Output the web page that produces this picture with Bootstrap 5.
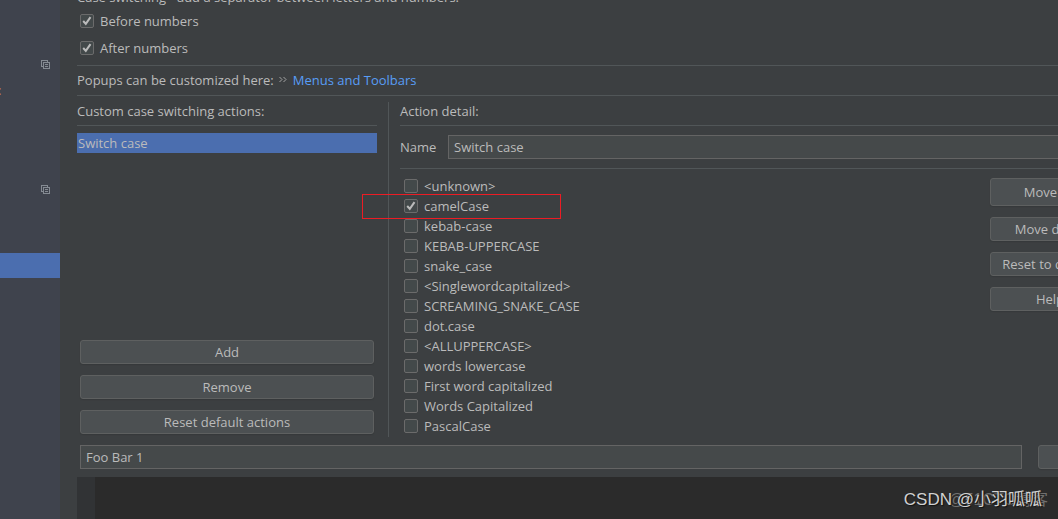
<!DOCTYPE html>
<html lang="en">
<head>
<meta charset="utf-8">
<meta name="viewport" content="width=device-width, initial-scale=1">
<title>String Manipulation settings</title>
<link href="https://cdn.jsdelivr.net/npm/bootstrap@5.3.0/dist/css/bootstrap.min.css" rel="stylesheet">
<style>
  body { background: #3c3f41; color: #bbb; font: 13px/20px "Open Sans", "Noto Sans CJK SC", sans-serif; }
  .sidebar { width: 60px; background: #3f434d; }
  .sidebar svg { position: absolute; left: 41px; }
  .sidebar .icon-a { top: 60px; }
  .sidebar .icon-b { top: 185px; }
  .sidebar .selection { position: absolute; top: 253px; left: 0; right: 0; height: 25px; background: #4b6eaf; }
  .sidebar .modified { position: absolute; left: -2px; top: 80px; color: #c8946a; }
  /* the settings pane is wider than the window and is scrolled down a little */
  .pane { margin-right: -55px; padding-left: 17px; }
  .scrolled { margin-top: -13px; height: 20px; }
  .rule-b { border-bottom: 1px solid #515658; }
  .opt { display: flex; align-items: center; height: 27px; padding-left: 3px; }
  .opt label, .case-row label { padding-left: 6px; }
  .case-row { position: relative; display: flex; align-items: center; height: 20px; padding-left: 4px; }
  .tick { appearance: none; width: 14px; height: 14px; margin: 0; flex: none; border: 1px solid #6b6b6b; border-radius: 2px; background: #43494a; }
  .tick:checked { background: #43494a url("data:image/svg+xml,%3Csvg xmlns='http://www.w3.org/2000/svg' viewBox='0 0 12 12'%3E%3Cpath d='M2.200 6 4.800 8.800 9.500 2.200' fill='none' stroke='%23bbb' stroke-width='2'/%3E%3C/svg%3E") center/12px; }
  .pop-link { color: #589df6; text-decoration: none; }
  .popups { height: 30px; padding-bottom: 1px; }
  .split { height: 335px; margin: 6px 0 8px; }
  .left { width: 312px; padding-right: 11px; border-right: 1px solid #515658; }
  .right { padding-left: 11px; }
  .pane-title { height: 24px; line-height: 18px; }
  .actions { margin-top: 7px; }
  .actions .active-item { background: #4b6eaf; height: 20px; padding: 0 1px; border: 0; color: #bbb; text-align: left; }
  .stack { gap: 11px; padding: 0 3px 3px; }
  .ide-btn { height: 24px; padding: 0; border: 1px solid #5e6060; border-radius: 3px; background: #4c5052; color: #bbb; font-size: 13px; line-height: 20px; box-shadow: 0 1px 1px #36393b; }
  .ide-btn.tall { height: 28px; }
  .field { height: 24px; min-width: 0; padding: 0 5px; border: 1px solid #646464; background: #45494a; color: #bbb; font-size: 13px; }
  .name-row { height: 43px; }
  .name-row label { width: 48px; }
  .cases { padding-top: 7px; }
  .side-buttons { width: 120px; gap: 11px; margin: 2px 3px 0 0; }
  .marker { position: absolute; left: -38px; top: -2px; width: 199px; height: 25px; border: 1px solid #ed1c24; }
  .preview { padding: 0 3px 8px; gap: 16px; }
  .preview .ide-btn { width: 72px; }
  .editor { background: #2b2b2b; }
  .gutter { width: 18px; background: #313335; }
  .wm { position: absolute; bottom: 7px; line-height: 24px; white-space: nowrap; font-family: "Liberation Sans", "Noto Sans CJK SC", sans-serif; }
  .wm-back { right: 10px; font-size: 16px; color: #707070; }
  .wm-front { right: 16px; font-size: 17px; color: #d0d0d0; text-shadow: 1px 1px 1px #111; }
</style>
</head>
<body class="overflow-hidden">
<div class="d-flex vh-100 overflow-hidden position-relative">
  <aside class="sidebar position-relative flex-shrink-0 overflow-hidden">
    <span class="modified">:</span>
    <svg class="icon-a" width="9" height="9" viewBox="0 0 9 9" fill="none" stroke="#858b93" shape-rendering="crispEdges"><path d="M2 6.500H.5V.5H6.500V2M2.500 2.500H8.500V8.500H2.500ZM4 4.500H7M4 6.500H7"/></svg>
    <svg class="icon-b" width="9" height="9" viewBox="0 0 9 9" fill="none" stroke="#858b93" shape-rendering="crispEdges"><path d="M2 6.500H.5V.5H6.500V2M2.500 2.500H8.500V8.500H2.500ZM4 4.500H7M4 6.500H7"/></svg>
    <div class="selection"></div>
  </aside>
  <main class="pane d-flex flex-column flex-grow-1">
    <div class="scrolled">Case switching - add a separator between letters and numbers:</div>
    <div class="rule-b pb-1">
      <div class="opt"><input class="tick" type="checkbox" id="before" checked><label for="before">Before numbers</label></div>
      <div class="opt"><input class="tick" type="checkbox" id="after" checked><label for="after">After numbers</label></div>
    </div>
    <div class="popups rule-b d-flex align-items-center flex-shrink-0">
      <span>Popups can be customized here:</span>
      <svg class="me-1" width="15" height="8" viewBox="0 0 15 8" fill="none" stroke="#a5a5a5"><path d="M5.500 1l2.500 2.500-2.500 2.500M9.500 1l2.500 2.500-2.500 2.500"/></svg>
      <a class="pop-link" href="#">Menus and Toolbars</a>
    </div>
    <div class="split d-flex flex-shrink-0">
      <section class="left d-flex flex-column flex-shrink-0">
        <div class="pane-title rule-b">Custom case switching actions:</div>
        <div class="actions d-grid"><button class="active-item" type="button">Switch case</button></div>
        <div class="stack d-grid mt-auto">
          <button class="ide-btn" type="button">Add</button>
          <button class="ide-btn" type="button">Remove</button>
          <button class="ide-btn" type="button">Reset default actions</button>
        </div>
      </section>
      <section class="right flex-grow-1 d-flex flex-column">
        <div class="pane-title rule-b">Action detail:</div>
        <div class="name-row rule-b d-flex align-items-center"><label for="name">Name</label><input class="field flex-grow-1" id="name" type="text" value="Switch case"></div>
        <div class="cases d-flex justify-content-between">
          <div>
            <div class="case-row"><input class="tick" type="checkbox" id="c1"><label for="c1">&lt;unknown&gt;</label></div>
            <div class="case-row"><input class="tick" type="checkbox" id="c2" checked><label for="c2">camelCase</label><div class="marker"></div></div>
            <div class="case-row"><input class="tick" type="checkbox" id="c3"><label for="c3">kebab-case</label></div>
            <div class="case-row"><input class="tick" type="checkbox" id="c4"><label for="c4">KEBAB-UPPERCASE</label></div>
            <div class="case-row"><input class="tick" type="checkbox" id="c5"><label for="c5">snake_case</label></div>
            <div class="case-row"><input class="tick" type="checkbox" id="c6"><label for="c6">&lt;Singlewordcapitalized&gt;</label></div>
            <div class="case-row"><input class="tick" type="checkbox" id="c7"><label for="c7">SCREAMING_SNAKE_CASE</label></div>
            <div class="case-row"><input class="tick" type="checkbox" id="c8"><label for="c8">dot.case</label></div>
            <div class="case-row"><input class="tick" type="checkbox" id="c9"><label for="c9">&lt;ALLUPPERCASE&gt;</label></div>
            <div class="case-row"><input class="tick" type="checkbox" id="c10"><label for="c10">words lowercase</label></div>
            <div class="case-row"><input class="tick" type="checkbox" id="c11"><label for="c11">First word capitalized</label></div>
            <div class="case-row"><input class="tick" type="checkbox" id="c12"><label for="c12">Words Capitalized</label></div>
            <div class="case-row"><input class="tick" type="checkbox" id="c13"><label for="c13">PascalCase</label></div>
          </div>
          <div class="side-buttons d-flex flex-column">
            <button class="ide-btn tall" type="button">Move up</button>
            <button class="ide-btn" type="button">Move down</button>
            <button class="ide-btn" type="button">Reset to default</button>
            <button class="ide-btn" type="button">Help</button>
          </div>
        </div>
      </section>
    </div>
    <div class="preview d-flex">
      <input class="field flex-grow-1" type="text" value="Foo Bar 1" aria-label="Preview text">
      <button class="ide-btn" type="button" aria-label="Reset"></button>
    </div>
    <div class="editor flex-grow-1 d-flex"><div class="gutter"></div></div>
  </main>
  <div class="wm wm-back">@51CTO博客</div>
  <div class="wm wm-front">CSDN @小羽呱呱</div>
</div>
<script src="https://cdn.jsdelivr.net/npm/bootstrap@5.3.0/dist/js/bootstrap.bundle.min.js"></script>
</body>
</html>
